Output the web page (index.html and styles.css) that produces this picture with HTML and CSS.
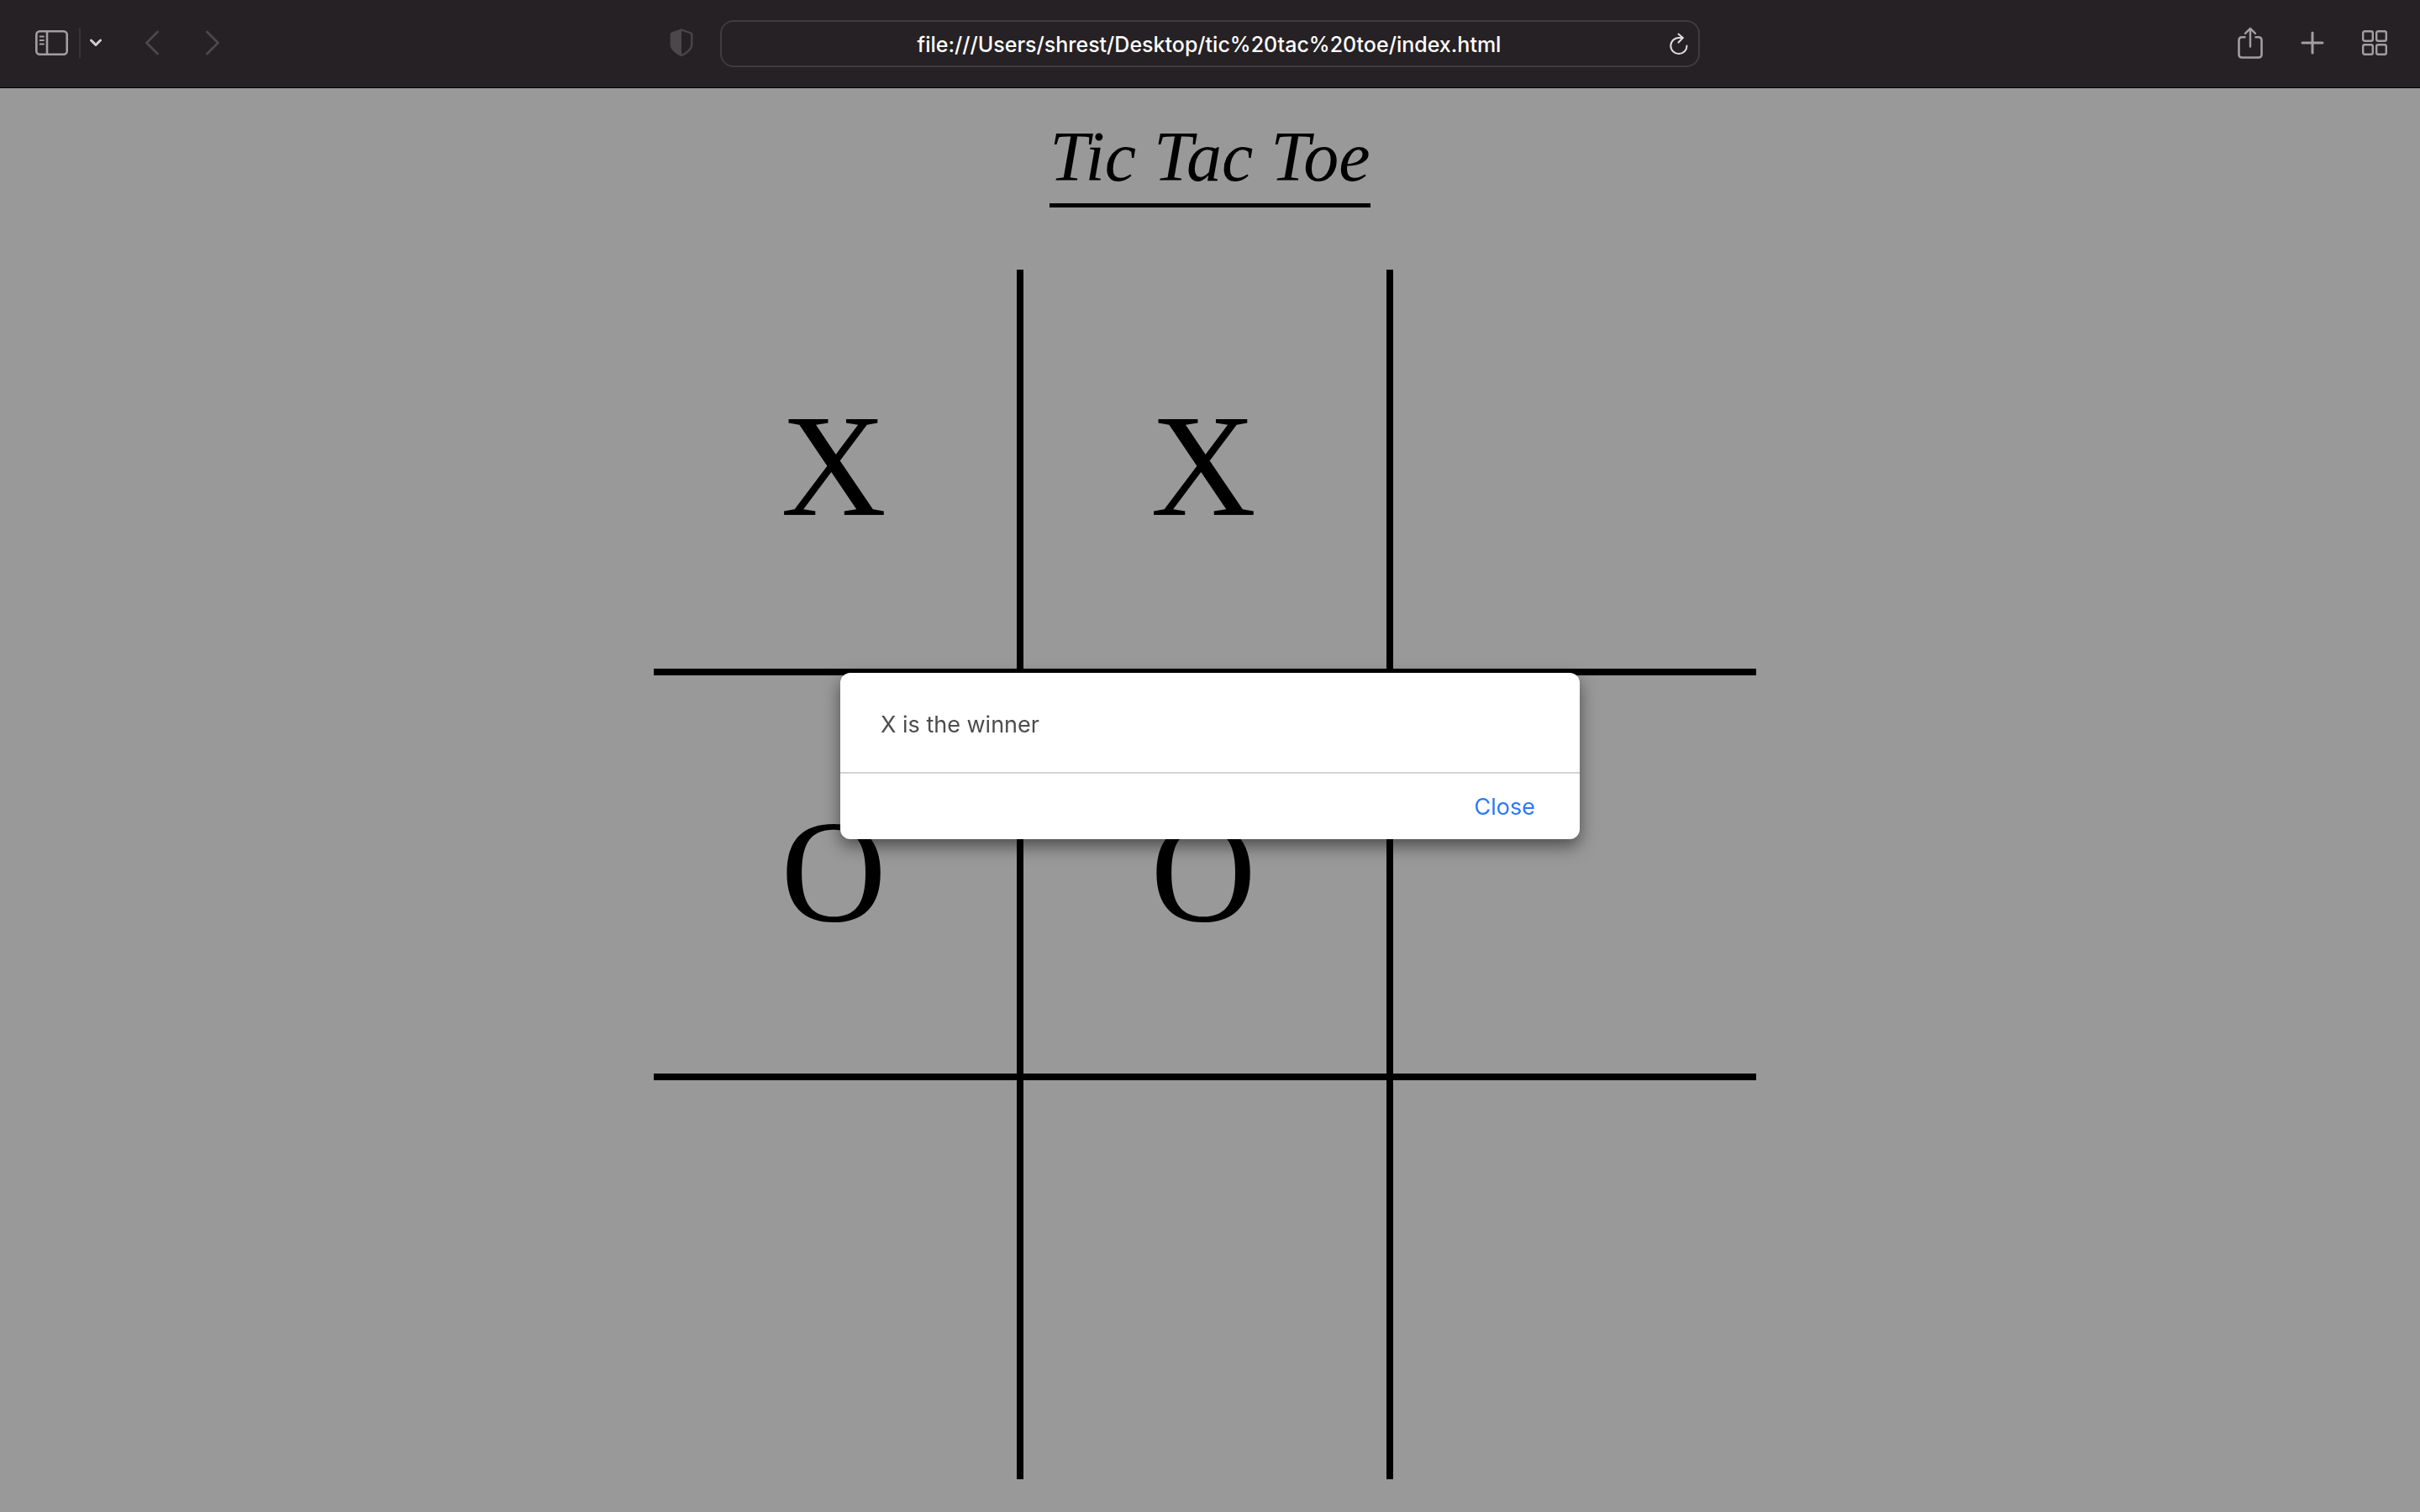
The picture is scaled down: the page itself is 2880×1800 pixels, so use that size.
FILE: index.html
```
<!DOCTYPE html>
<html lang="en">
<head>
<meta charset="utf-8">
<title>Tic Tac Toe</title>
<link rel="stylesheet" href="styles.css">
</head>
<body>
<header class="toolbar">
  <nav class="tools tools-left" aria-label="Navigation">
    <button class="tool" type="button" aria-label="Show sidebar">
      <svg width="39" height="30" viewBox="0 0 39 30" fill="none" stroke="currentColor" stroke-width="2.6">
        <rect x="1.3" y="1.3" width="36.4" height="27.4" rx="4"/>
        <path d="M14 1v28"/>
        <path d="M5.600 7.500h4.400M5.600 12h4.400M5.600 16.500h4.400" stroke-width="1.800" stroke-linecap="round"/>
      </svg>
    </button>
    <span class="divider"></span>
    <button class="tool tool-bright" type="button" aria-label="Tab groups">
      <svg width="14" height="10" viewBox="0 0 14 10" fill="none" stroke="currentColor" stroke-width="3" stroke-linecap="round" stroke-linejoin="round"><path d="M1.500 2L7 7.500L12.500 2"/></svg>
    </button>
    <button class="tool tool-dim tool-back" type="button" aria-label="Back">
      <svg width="16" height="30" viewBox="0 0 16 30" fill="none" stroke="currentColor" stroke-width="3" stroke-linecap="round" stroke-linejoin="round"><path d="M14.500 2L1.500 15L14.500 28"/></svg>
    </button>
    <button class="tool tool-dim tool-forward" type="button" aria-label="Forward">
      <svg width="16" height="30" viewBox="0 0 16 30" fill="none" stroke="currentColor" stroke-width="3" stroke-linecap="round" stroke-linejoin="round"><path d="M1.500 2L14.500 15L1.500 28"/></svg>
    </button>
    <button class="tool tool-dim tool-shield" type="button" aria-label="Privacy report">
      <svg width="28" height="34" viewBox="0 0 28 34">
        <path d="M14 1.500L25 5.300Q26.300 5.800 26.300 7.200V19Q26.300 23 22.500 26.500Q19 30 14 32Q9 30 5.500 26.500Q1.700 23 1.700 19V7.200Q1.700 5.800 3 5.300Z" fill="none" stroke="currentColor" stroke-width="2.200"/>
        <path d="M14 1.500L3 5.300Q1.700 5.800 1.700 7.200V19Q1.700 23 5.500 26.500Q9 30 14 32Z" fill="currentColor"/>
      </svg>
    </button>
  </nav>
  <form class="address">
    <input class="address-input" type="text" aria-label="Address" value="file:///Users/shrest/Desktop/tic%20tac%20toe/index.html">
    <button class="tool tool-reload" type="button" aria-label="Reload">
      <svg width="22" height="27" viewBox="0 0 22 27" fill="none" stroke="currentColor" stroke-width="2" stroke-linecap="round" stroke-linejoin="round">
        <path d="M20.500 15.500A9.600 9.600 0 1 1 10.900 5.900H15.500"/>
        <path d="M10.500 1.500L15.800 6L10.500 11.500"/>
      </svg>
    </button>
  </form>
  <div class="tools tools-right">
    <button class="tool" type="button" aria-label="Share">
      <svg width="30" height="38" viewBox="0 0 30 38" fill="none" stroke="currentColor" stroke-width="2.600" stroke-linecap="round" stroke-linejoin="round">
        <path d="M9.500 12.300H5.300Q1.500 12.300 1.500 16.100V32.700Q1.500 36.500 5.300 36.500H24.700Q28.500 36.500 28.500 32.700V16.100Q28.500 12.300 24.700 12.300H20.500" stroke-linecap="butt"/>
        <path d="M15 2V23.500M9 7.800L15 1.800L21 7.800" stroke-width="2.400"/>
      </svg>
    </button>
    <button class="tool" type="button" aria-label="New tab">
      <svg width="28" height="28" viewBox="0 0 28 28" fill="none" stroke="currentColor" stroke-width="3" stroke-linecap="round"><path d="M14 2v24M2 14h24"/></svg>
    </button>
    <button class="tool" type="button" aria-label="Tab overview">
      <svg width="30" height="30" viewBox="0 0 30 30" fill="none" stroke="currentColor" stroke-width="2.400">
        <rect x="1.200" y="1.200" width="11.600" height="11.600" rx="2"/><rect x="17.200" y="1.200" width="11.600" height="11.600" rx="2"/>
        <rect x="1.200" y="17.200" width="11.600" height="11.600" rx="2"/><rect x="17.200" y="17.200" width="11.600" height="11.600" rx="2"/>
      </svg>
    </button>
  </div>
</header>

<main class="game">
  <h1 class="title">Tic Tac Toe</h1>
  <div class="board">
    <button class="cell" type="button">X</button>
    <button class="cell" type="button">X</button>
    <button class="cell" type="button" aria-label="Empty"></button>
    <button class="cell" type="button">O</button>
    <button class="cell" type="button">O</button>
    <button class="cell" type="button" aria-label="Empty"></button>
    <button class="cell" type="button" aria-label="Empty"></button>
    <button class="cell" type="button" aria-label="Empty"></button>
    <button class="cell" type="button" aria-label="Empty"></button>
  </div>
</main>

<div class="overlay">
  <div class="alert" role="alertdialog" aria-labelledby="alert-text">
    <p class="alert-text" id="alert-text">X is the winner</p>
    <div class="alert-actions">
      <button class="alert-close" type="button">Close</button>
    </div>
  </div>
</div>
</body>
</html>
```
FILE: styles.css
```
* {
  box-sizing: border-box;
}

body {
  margin: 0;
  min-height: 100vh;
  background: #999;
  color: #000;
  font-family: "Liberation Serif", "Times New Roman", serif;
}

button,
input {
  margin: 0;
  padding: 0;
  border: 0;
  background: none;
  color: inherit;
  font: inherit;
}

/* Browser toolbar */

.toolbar {
  display: grid;
  grid-template-columns: 1fr minmax(0, 1166px) 1fr;
  align-items: center;
  height: 105px;
  border-bottom: 1px solid #000;
  background: #262124;
}

.tools {
  display: flex;
  align-items: center;
}

.tools-left {
  padding: 0 32px 2px 42px;
}

.tools-right {
  justify-content: flex-end;
  gap: 45px;
  padding: 0 39px 2px 0;
}

.tool {
  display: flex;
  color: #a39ea2;
}

.tool-bright {
  color: #d2cdd1;
}

.tool-dim {
  color: #4c474a;
}

.tool-back {
  margin-left: 52px;
}

.tool-forward {
  margin-left: 56px;
}

.tool-shield {
  margin-left: auto;
}

.divider {
  width: 2px;
  height: 36px;
  margin: 0 11px 0 13px;
  background: #393437;
}

.address {
  display: flex;
  align-items: center;
  height: 56px;
  padding: 0 12px;
  border: 2px solid #403b3e;
  border-radius: 16px;
}

.address-input {
  flex: 1;
  min-width: 0;
  height: 52px;
  padding: 2px 0 0 20px;
  outline: 0;
  color: #fff;
  font: 500 25px/32px Inter, "Liberation Sans", sans-serif;
  text-align: center;
}

.tool-reload {
  color: #e0dcdf;
}

/* Game */

.game {
  display: flex;
  flex-direction: column;
  align-items: center;
}

.title {
  margin: 32px 0 74px;
  padding-bottom: 6px;
  border-bottom: 5px solid #000;
  font-size: 84px;
  font-style: italic;
  font-weight: 400;
  line-height: 99px;
}

.board {
  display: grid;
  grid-template-columns: repeat(3, 1fr);
  grid-template-rows: repeat(3, 1fr);
  gap: 8px;
  width: 1312px;
  max-width: 100%;
  height: 80vh;
  margin-right: 12px;
  background: #000;
}

.cell {
  padding: 0 4px 6px 0;
  background: #999;
  font-size: 174px;
  line-height: 190px;
}

/* Alert */

.overlay {
  position: fixed;
  inset: 0;
  display: flex;
  align-items: center;
  justify-content: center;
}

.alert {
  width: 880px;
  max-width: 100%;
  border-radius: 12px;
  background: #fff;
  box-shadow: 0 8px 20px rgba(0, 0, 0, 0.5);
  font-family: Inter, "Liberation Sans", sans-serif;
  font-size: 27px;
  line-height: 38px;
}

.alert-text {
  margin: 0;
  padding: 43px 48px 37px;
  color: #4d4d4d;
}

.alert-actions {
  display: flex;
  justify-content: flex-end;
  padding: 21px 53px 19px;
  border-top: 2px solid #d3d3d3;
}

.alert-close {
  color: #2f78f6;
}
```
